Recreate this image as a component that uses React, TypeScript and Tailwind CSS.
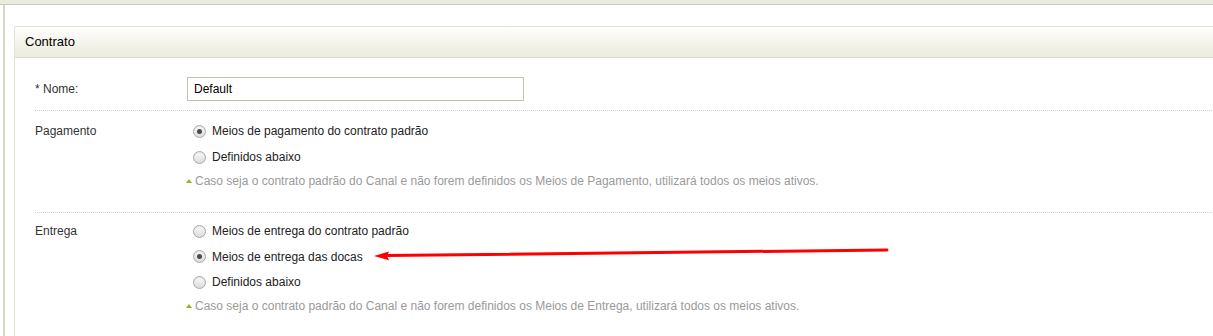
import React from 'react'

const Radio = ({ checked }: { checked?: boolean }) => (
  <span
    className={`
      relative inline-flex items-center justify-center
      w-[13px] h-[13px] rounded-full
      border border-[#a9a9a9]
      bg-gradient-to-b from-[#fafafa] to-[#dcdcdc]
      shadow-[inset_0_1px_1px_rgba(0,0,0,0.08)]
    `}
  >
    {checked && <span className="w-[5px] h-[5px] rounded-full bg-[#4a4a4a]" />}
  </span>
)

const Option = ({ label, checked }: { label: string; checked?: boolean }) => (
  <div className="flex items-center h-[26px] pl-[6px]">
    <Radio checked={checked} />
    <span className="ml-[6px] text-[#222]">{label}</span>
  </div>
)

const Hint = ({ text }: { text: string }) => (
  <div className="flex items-center h-[22px] text-[#9a9a9a]">
    <span className="w-0 h-0 border-l-[3px] border-r-[3px] border-b-[4px] border-l-transparent border-r-transparent border-b-[#8fb526] mr-[3px] -ml-[1px]" />
    <span>{text}</span>
  </div>
)

const Arrow = () => (
  <svg
    className="absolute left-0 top-0 pointer-events-none"
    width="1213"
    height="336"
    viewBox="0 0 1213 336"
  >
    <path d="M887 250 L386 255.6" stroke="#ff0000" strokeWidth="3" strokeLinecap="round" fill="none" />
    <path d="M374 256 L389 251.5 L387 256 L389 260.3 Z" fill="#ff0000" />
  </svg>
)

export default function App() {
  return (
    <div
      className="relative w-[1213px] h-[336px] overflow-hidden bg-white text-[12px]"
      style={{ fontFamily: '"Liberation Sans", Arial, sans-serif' }}
    >
      <div className="h-[5px] bg-[#ecebdf] border-b border-[#c8c8b6]" />
      <div className="ml-[3px] h-[331px] border-l-2 border-[#d8d8c8] pl-[9px] pt-[21px]">
        <div className="h-full w-[1220px] border-l border-t border-[#e4e4d4]">
          <div className="h-[31px] flex items-center pl-[10px] bg-gradient-to-b from-[#fefefe] to-[#ebeadd] border-b border-[#d9d9cc] text-[13px] text-black">
            Contrato
          </div>

          <div className="pl-[20px]">
            <div className="flex pt-[19px] pb-[9px] border-b border-dotted border-[#cfcfcf]">
              <div className="w-[152px] flex items-center text-[#333]">* Nome:</div>
              <input
                readOnly
                value="Default"
                className="w-[337px] h-[24px] border border-[#c2c5ab] px-[6px] text-[12px] text-black outline-none"
                style={{ fontFamily: '"Liberation Sans", Arial, sans-serif' }}
              />
            </div>

            <div className="flex pt-[7px] pb-[20px] border-b border-dotted border-[#cfcfcf]">
              <div className="w-[152px] h-[26px] flex items-center text-[#333]">Pagamento</div>
              <div className="flex flex-col">
                <Option label="Meios de pagamento do contrato padrão" checked />
                <Option label="Definidos abaixo" />
                <Hint text="Caso seja o contrato padrão do Canal e não forem definidos os Meios de Pagamento, utilizará todos os meios ativos." />
              </div>
            </div>

            <div className="flex pt-[5px]">
              <div className="w-[152px] h-[26px] flex items-center text-[#333]">Entrega</div>
              <div className="flex flex-col">
                <Option label="Meios de entrega do contrato padrão" />
                <div className="h-[25px] flex items-center pl-[6px]">
                  <Radio checked />
                  <span className="ml-[6px] text-[#222]">Meios de entrega das docas</span>
                </div>
                <Option label="Definidos abaixo" />
                <Hint text="Caso seja o contrato padrão do Canal e não forem definidos os Meios de Entrega, utilizará todos os meios ativos." />
              </div>
            </div>
          </div>
        </div>
      </div>
      <Arrow />
    </div>
  )
}
